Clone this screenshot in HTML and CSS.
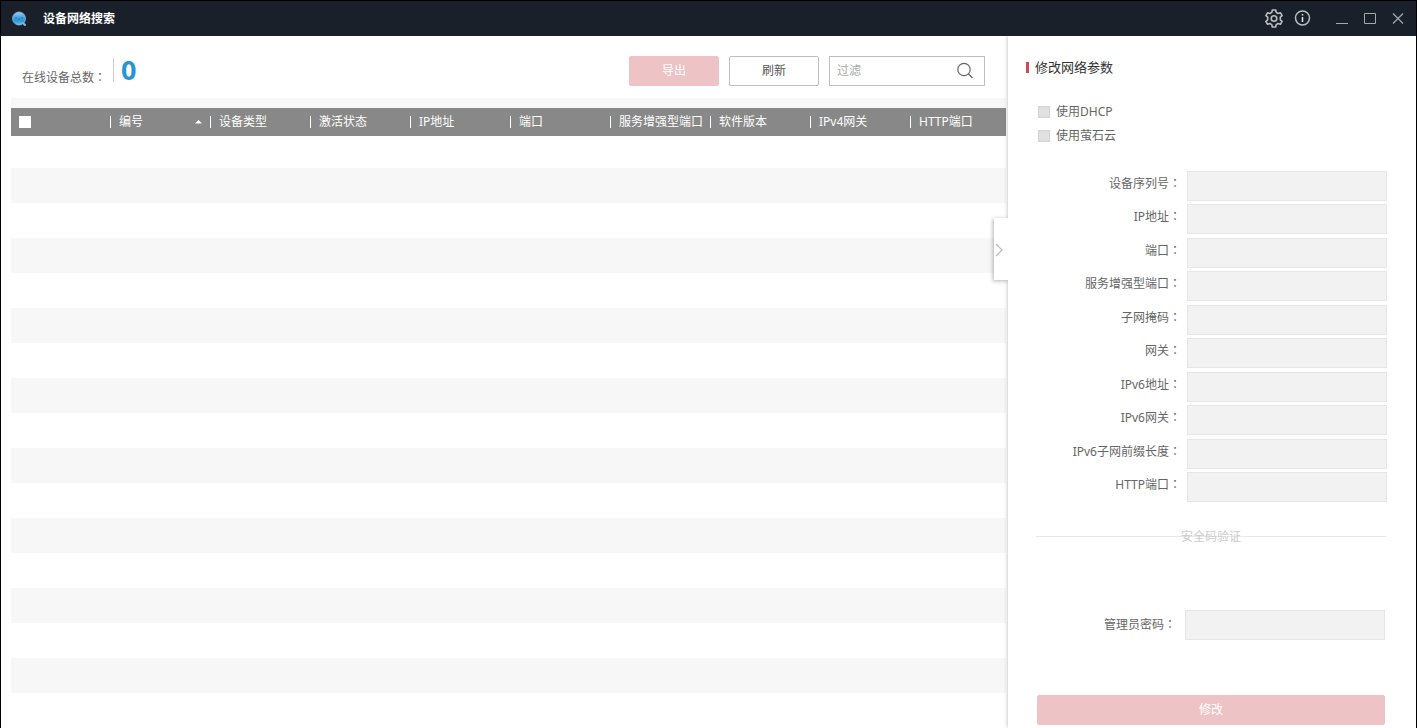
FILE: index.html
```html
<!DOCTYPE html>
<html lang="zh-CN">
<head>
<meta charset="utf-8">
<meta name="viewport" content="width=device-width, initial-scale=1">
<title>设备网络搜索</title>
<link rel="stylesheet" href="styles.css">
</head>
<body>
<div class="window">
  <header class="titlebar">
    <svg class="logo" viewBox="0 0 16 16" aria-hidden="true">
      <defs><linearGradient id="lens" x1="0" y1="0" x2="0" y2="1"><stop offset="0" stop-color="#9fd0ee"/><stop offset="0.45" stop-color="#3f9fdf"/><stop offset="0.7" stop-color="#2f93da"/><stop offset="1" stop-color="#7cc6f0"/></linearGradient></defs>
      <path d="M12 12l2 2" stroke="#8fb9d4" stroke-width="2" stroke-linecap="round"/>
      <circle cx="8" cy="7.500" r="6.500" fill="url(#lens)" stroke="#86bfe4" stroke-width="0.800"/>
      <path d="M4 7h2M7 8h2M10 7h2" stroke="#1d74bd" stroke-width="1"/>
    </svg>
    <h1 class="title">设备网络搜索</h1>
    <div class="tools">
      <button class="tool" type="button" aria-label="设置">
        <svg class="tool-icon" viewBox="0 0 20 20" aria-hidden="true"><g fill="none" stroke="#b9bcc0" stroke-width="1.600" stroke-linejoin="round"><path d="M8.300 1h3.400l.5 2.400 1.900 1.100 2.300-.8 1.700 2.900-1.800 1.600v2.600l1.800 1.600-1.700 2.900-2.300-.8-1.900 1.100-.5 2.400H8.300l-.5-2.400-1.900-1.100-2.300.8-1.700-2.900 1.800-1.600V8.200L1.900 6.600l1.700-2.900 2.300.8 1.900-1.100z"/><circle cx="10" cy="9.500" r="2.800"/></g></svg>
      </button>
      <button class="tool" type="button" aria-label="关于">
        <svg class="tool-icon" viewBox="0 0 20 20" aria-hidden="true"><circle cx="9.500" cy="9" r="7" fill="none" stroke="#b9bcc0" stroke-width="1.500"/><path d="M9.500 8v5M9.500 5v1.500" stroke="#e4e6e8" stroke-width="1.500"/></svg>
      </button>
    </div>
    <div class="controls">
      <button class="control" type="button" aria-label="最小化"><svg class="control-icon" viewBox="0 0 12 12" aria-hidden="true"><path d="M0 10.500h12" stroke="#a4a8ad"/></svg></button>
      <button class="control" type="button" aria-label="最大化"><svg class="control-icon" viewBox="0 0 12 12" aria-hidden="true"><path d="M.5.5h11v10H.5z" fill="none" stroke="#a4a8ad"/></svg></button>
      <button class="control" type="button" aria-label="关闭"><svg class="control-icon" viewBox="0 0 12 12" aria-hidden="true"><path d="M1 .5l10 10M11 .5l-10 10" stroke="#a4a8ad" stroke-width="1.200"/></svg></button>
    </div>
  </header>
  <div class="content">
    <main class="devices">
      <div class="toolbar">
        <p class="total">在线设备总数<span class="colon" lang="zh-TW">：</span></p>
        <strong class="count">0</strong>
        <div class="actions">
          <button class="button primary" type="button" disabled>导出</button>
          <button class="button" type="button">刷新</button>
          <div class="search">
            <input class="search-input" type="text" placeholder="过滤" aria-label="过滤">
            <svg class="search-icon" viewBox="0 0 18 18" aria-hidden="true"><circle cx="8" cy="7.500" r="6.200" fill="none" stroke="#666" stroke-width="1.200"/><path d="M12.500 12l4 4" stroke="#666" stroke-width="1.300"/></svg>
          </div>
        </div>
      </div>
      <div class="grid">
        <table class="table">
          <thead>
            <tr>
              <th class="head select"><input class="check-all" type="checkbox" aria-label="全选"></th>
              <th class="head"><div class="cell sorted">编号<svg class="sort" viewBox="0 0 7 4" aria-hidden="true"><path d="M0 3.500L3.500 0 7 3.500z" fill="#fff"/></svg></div></th>
              <th class="head"><div class="cell">设备类型</div></th>
              <th class="head"><div class="cell">激活状态</div></th>
              <th class="head"><div class="cell">IP地址</div></th>
              <th class="head"><div class="cell">端口</div></th>
              <th class="head"><div class="cell">服务增强型端口</div></th>
              <th class="head"><div class="cell">软件版本</div></th>
              <th class="head"><div class="cell">IPv4网关</div></th>
              <th class="head last"><div class="cell">HTTP端口</div></th>
            </tr>
          </thead>
          <tbody>
            <tr class="row first"><td colspan="10"></td></tr>
            <tr class="row"><td colspan="10"></td></tr>
            <tr class="row"><td colspan="10"></td></tr>
            <tr class="row"><td colspan="10"></td></tr>
            <tr class="row"><td colspan="10"></td></tr>
            <tr class="row"><td colspan="10"></td></tr>
            <tr class="row"><td colspan="10"></td></tr>
            <tr class="row"><td colspan="10"></td></tr>
            <tr class="row"><td colspan="10"></td></tr>
            <tr class="row"><td colspan="10"></td></tr>
            <tr class="row"><td colspan="10"></td></tr>
            <tr class="row"><td colspan="10"></td></tr>
            <tr class="row"><td colspan="10"></td></tr>
            <tr class="row"><td colspan="10"></td></tr>
            <tr class="row"><td colspan="10"></td></tr>
            <tr class="row"><td colspan="10"></td></tr>
            <tr class="row"><td colspan="10"></td></tr>
          </tbody>
        </table>
      </div>
    </main>
    <aside class="panel">
      <button class="handle" type="button" aria-label="收起"><svg class="chevron" viewBox="0 0 8 14" aria-hidden="true"><path d="M1 1l6 6-6 6" fill="none" stroke="#bbb" stroke-width="1.200"/></svg></button>
      <h2 class="heading">修改网络参数</h2>
      <form class="form">
        <div class="options">
          <label class="option"><input class="tick" type="checkbox" disabled>使用DHCP</label>
          <label class="option"><input class="tick" type="checkbox" disabled>使用萤石云</label>
        </div>
        <div class="fields">
          <div class="field"><label class="label" for="serial">设备序列号<span class="colon" lang="zh-TW">：</span></label><input class="input" id="serial" type="text" disabled></div>
          <div class="field"><label class="label" for="ip">IP地址<span class="colon" lang="zh-TW">：</span></label><input class="input" id="ip" type="text" disabled></div>
          <div class="field"><label class="label" for="port">端口<span class="colon" lang="zh-TW">：</span></label><input class="input" id="port" type="text" disabled></div>
          <div class="field"><label class="label" for="sdk">服务增强型端口<span class="colon" lang="zh-TW">：</span></label><input class="input" id="sdk" type="text" disabled></div>
          <div class="field"><label class="label" for="mask">子网掩码<span class="colon" lang="zh-TW">：</span></label><input class="input" id="mask" type="text" disabled></div>
          <div class="field"><label class="label" for="gateway">网关<span class="colon" lang="zh-TW">：</span></label><input class="input" id="gateway" type="text" disabled></div>
          <div class="field"><label class="label" for="ip6">IPv6地址<span class="colon" lang="zh-TW">：</span></label><input class="input" id="ip6" type="text" disabled></div>
          <div class="field"><label class="label" for="gateway6">IPv6网关<span class="colon" lang="zh-TW">：</span></label><input class="input" id="gateway6" type="text" disabled></div>
          <div class="field"><label class="label" for="prefix6">IPv6子网前缀长度<span class="colon" lang="zh-TW">：</span></label><input class="input" id="prefix6" type="text" disabled></div>
          <div class="field"><label class="label" for="http">HTTP端口<span class="colon" lang="zh-TW">：</span></label><input class="input" id="http" type="text" disabled></div>
        </div>
        <div class="section">安全码验证</div>
        <div class="field admin"><label class="label" for="password">管理员密码<span class="colon" lang="zh-TW">：</span></label><input class="input" id="password" type="password" disabled></div>
        <button class="button primary submit" type="submit" disabled>修改</button>
      </form>
    </aside>
  </div>
</div>
</body>
</html>
```
FILE: styles.css
```css
* {
  box-sizing: border-box;
}

body {
  margin: 0;
  background: #fff;
  color: #666;
  font: 12px/20px "Noto Sans", "Noto Sans CJK SC", sans-serif;
}

button,
input {
  margin: 0;
  font: inherit;
  color: inherit;
}

.window {
  display: flex;
  flex-direction: column;
  min-height: 100vh;
  border: 1px solid #000;
  border-bottom: 0;
}

.colon {
  font-family: "Noto Sans CJK TC", sans-serif;
}

/* Title bar */
.titlebar {
  display: flex;
  align-items: center;
  height: 35px;
  padding: 0 12px 0 10px;
  background: #1a2029;
}

.logo {
  width: 16px;
  height: 16px;
}

.title {
  margin: 0 auto 0 16px;
  color: #fff;
  font-size: 12px;
  font-weight: bold;
}

.tools {
  display: flex;
  gap: 9px;
  margin-right: 23px;
}

.controls {
  display: flex;
  gap: 16px;
}

.tool,
.control {
  display: flex;
  padding: 0;
  border: 0;
  background: none;
}

.tool-icon {
  width: 20px;
  height: 20px;
}

.control-icon {
  width: 12px;
  height: 12px;
}

.content {
  display: flex;
  flex: 1;
}

/* Device list */
.devices {
  flex: 1;
  min-width: 0;
  padding: 0 2px 0 10px;
}

.toolbar {
  display: flex;
  align-items: flex-start;
  height: 62px;
  padding: 20px 21px 0 11px;
}

.total {
  width: 91px;
  margin: 11px 0 0;
}

.count {
  height: 24px;
  margin-top: 2px;
  padding-left: 7px;
  border-left: 1px solid #ccc;
  color: #2595d8;
  font-size: 27px;
  line-height: 24px;
}

.actions {
  display: flex;
  gap: 10px;
  margin-left: auto;
}

.button {
  width: 90px;
  height: 30px;
  padding: 0;
  border: 1px solid #bfbfbf;
  border-radius: 2px;
  background: #fff;
  color: #555;
}

.primary {
  border-color: #eec3c5;
  background: #eec3c5;
  color: #fff;
}

.search {
  display: flex;
  align-items: center;
  width: 156px;
  height: 30px;
  padding: 0 10px 0 7px;
  border: 1px solid #bfbfbf;
}

.search-input {
  flex: 1;
  min-width: 0;
  padding: 0;
  border: 0;
  outline: 0;
  background: none;
}

.search-input::placeholder {
  color: #aaa;
  opacity: 1;
}

.search-icon {
  width: 18px;
  height: 18px;
}

.grid {
  padding-top: 10px;
  background: #f7f7f7;
}

.table {
  width: 100%;
  table-layout: fixed;
  border-collapse: collapse;
  background: #fff;
}

.head {
  width: 100px;
  height: 28px;
  padding: 0;
  background: #888;
  color: #fff;
  font-weight: normal;
  text-align: left;
}

.select {
  width: 99px;
  padding-left: 8px;
}

.last {
  width: auto;
}

.cell {
  height: 12px;
  padding-left: 8px;
  border-left: 1px solid #fff;
  line-height: 12px;
  white-space: nowrap;
}

.sorted {
  display: flex;
  align-items: center;
  justify-content: space-between;
  padding-right: 8px;
}

.sort {
  width: 7px;
  height: 4px;
}

.check-all,
.tick {
  appearance: none;
  display: block;
  width: 12px;
  height: 12px;
  background: #fff;
}

.row {
  height: 35px;
}

.row:nth-child(even) {
  background: #f7f7f7;
}

.first {
  height: 32px;
}

.row td {
  padding: 0;
}

/* Parameter panel */
.panel {
  position: relative;
  width: 408px;
  padding: 20px 29px 3px 28px;
  background: #fff;
  box-shadow: 0 0 4px rgba(0, 0, 0, 0.3);
  clip-path: inset(0 0 0 -20px);
}

.handle {
  position: absolute;
  top: 182px;
  left: -14px;
  display: flex;
  align-items: center;
  width: 15px;
  height: 62px;
  padding: 2px 0 0 1px;
  border: 0;
  background: #fff;
  box-shadow: -1px 1px 4px rgba(0, 0, 0, 0.3);
  clip-path: inset(-6px 1px -6px -6px);
}

.chevron {
  width: 8px;
  height: 14px;
}

.heading {
  display: flex;
  align-items: center;
  gap: 6px;
  margin: 0 0 22px -10px;
  color: #333;
  font-size: 13px;
  font-weight: normal;
  line-height: 22px;
}

.heading::before {
  width: 3px;
  height: 11px;
  background: #cf4a52;
  content: "";
}

.option {
  display: flex;
  align-items: center;
  gap: 6px;
  height: 24px;
  padding-left: 2px;
}

.tick {
  border: 1px solid #d4d4d4;
  background: #e0e0e0;
}

.fields {
  display: flex;
  flex-direction: column;
  justify-content: space-between;
  height: 331px;
  margin-top: 23px;
}

.field {
  display: flex;
  justify-content: flex-end;
  gap: 6px;
}

.label {
  padding-top: 2px;
}

.input {
  width: 200px;
  height: 30px;
  padding: 0 8px;
  border: 1px solid #e6e6e6;
  background: #f2f2f2;
}

.section {
  margin: 23px 1px 63px 0;
  padding-top: 2px;
  background: linear-gradient(#e8e8e8, #e8e8e8) center / 100% 1px no-repeat;
  color: #ccc;
  text-align: center;
}

.admin {
  gap: 9px;
  margin-right: 2px;
}

.admin .label {
  padding-top: 4px;
}

.submit {
  display: block;
  width: 348px;
  margin: 55px 2px 0 auto;
}
```
